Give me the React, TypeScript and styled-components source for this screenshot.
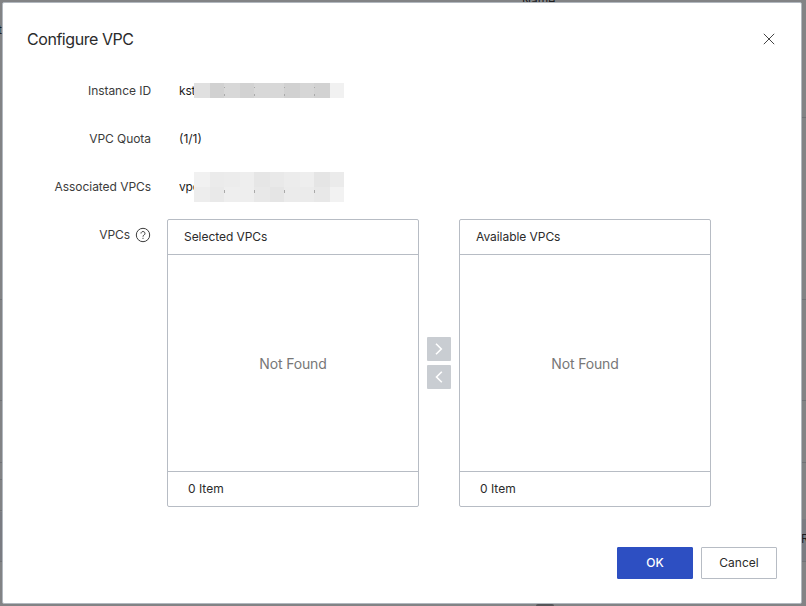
import React from "react";
import styled, { createGlobalStyle } from "styled-components";

const GlobalStyle = createGlobalStyle`
  * { box-sizing: border-box; }
  body {
    margin: 0;
    overflow: hidden;
    font-family: Inter, "Liberation Sans", sans-serif;
    font-size: 12px;
    line-height: 20px;
    color: #2b2b2b;
  }
`;

const Backdrop = styled.div`
  position: relative;
  height: 606px;
  padding: 2px 4px 2px 2px;
  background: #828385;
  overflow: hidden;
`;

const PageLine = styled.div<{ $y: number; $side: "left" | "right" }>`
  position: absolute;
  ${(p) => p.$side}: 0;
  top: ${(p) => p.$y}px;
  width: 4px;
  height: 1px;
  background: #707276;
`;

const PageBand = styled.div<{ $side: "left" | "right"; $y: number; $h: number }>`
  position: absolute;
  ${(p) => p.$side}: 0;
  top: ${(p) => p.$y}px;
  width: 4px;
  height: ${(p) => p.$h}px;
  background: #7a7c82;
`;

const PageText = styled.span<{ $x: number; $y: number }>`
  position: absolute;
  left: ${(p) => p.$x}px;
  top: ${(p) => p.$y}px;
  color: #1c1c1e;
  white-space: nowrap;
`;

const PageSmudge = styled.div`
  position: absolute;
  left: 536px;
  bottom: 0;
  width: 18px;
  height: 2px;
  border-radius: 2px 2px 0 0;
  background: #555558;
`;

const Dialog = styled.section`
  position: relative;
  display: flex;
  flex-direction: column;
  width: 800px;
  height: 602px;
  padding: 24px;
  background: #fff;
  border: 1px solid #b2b8bf;
  border-radius: 2px;
`;

const Header = styled.header`
  display: flex;
  align-items: center;
  justify-content: space-between;
  height: 24px;
`;

const Title = styled.h1`
  margin: 0;
  font-size: 16px;
  line-height: 24px;
  font-weight: 400;
  letter-spacing: -0.45px;
`;

const CloseButton = styled.button`
  display: flex;
  padding: 2px;
  border: 0;
  background: none;
  color: #444;
`;

const Form = styled.div`
  display: flex;
  flex-direction: column;
  gap: 16px;
  margin-top: 24px;
`;

const Field = styled.div`
  display: grid;
  grid-template-columns: 124px 1fr;
  column-gap: 28px;
  min-height: 32px;
  line-height: 32px;
`;

const TransferField = styled(Field)`
  column-gap: 16px;
`;

const Label = styled.div`
  display: flex;
  justify-content: flex-end;
  align-items: center;
  gap: 5px;
  height: 32px;
  color: #3c3c3c;
  letter-spacing: -0.05px;
  white-space: nowrap;
`;

const Value = styled.div`
  display: flex;
  align-items: center;
  height: 32px;
  color: #1c1c1c;
`;

const Prefix = styled.span`
  width: 16px;
  margin-right: -0.6px;
  overflow: hidden;
  letter-spacing: -0.2px;
  white-space: nowrap;
`;

const Mosaic = styled.div<{ $shift: number }>`
  display: grid;
  grid-template-columns: 16px 14px 16px 14px 16px 14px 16px 14px 16px 14px;
  grid-auto-rows: 15px;
  width: 150px;
  margin-top: ${(p) => p.$shift}px;
`;

const Tile = styled.i<{ $shade: string; $seam: boolean; $lower: boolean }>`
  background: ${(p) =>
    p.$seam
      ? `linear-gradient(#aaa, #aaa) 0 ${p.$lower ? 3 : 4}px / 1px 1px no-repeat,
         linear-gradient(#aaa, #aaa) 0 ${p.$lower ? 4 : 11}px / 1px 2px no-repeat,
         ${p.$shade}`
      : p.$shade};
`;

const Transfer = styled.div`
  display: flex;
  align-items: center;
  gap: 8px;
  line-height: 20px;
`;

const Panel = styled.div`
  display: flex;
  flex-direction: column;
  width: 252px;
  height: 288px;
  border: 1px solid #b7bcc4;
  border-radius: 2px;
`;

const PanelHeader = styled.div`
  height: 35px;
  padding: 7px 16px;
  border-bottom: 1px solid #b7bcc4;
  letter-spacing: -0.05px;
`;

const PanelBody = styled.div`
  display: flex;
  flex: 1;
  align-items: center;
  justify-content: center;
  padding-top: 2px;
  font-size: 14px;
  letter-spacing: -0.15px;
  color: #777;
`;

const PanelFooter = styled.div`
  height: 35px;
  padding: 7px 20px;
  border-top: 1px solid #b7bcc4;
`;

const Movers = styled.div`
  display: flex;
  flex-direction: column;
  gap: 4px;
`;

const MoveButton = styled.button`
  display: flex;
  align-items: center;
  justify-content: center;
  width: 24px;
  height: 24px;
  padding: 0;
  border: 0;
  border-radius: 1px;
  background: #c9cdd2;
  color: #fff;
`;

const Footer = styled.footer`
  display: flex;
  justify-content: flex-end;
  gap: 8px;
  margin-top: auto;
`;

const Button = styled.button<{ $primary?: boolean }>`
  width: 76px;
  height: 32px;
  padding: 0;
  border: 1px solid ${(p) => (p.$primary ? "#2d4fc2" : "#b7bcc4")};
  border-radius: 1px;
  background: ${(p) => (p.$primary ? "#2d4fc2" : "#fff")};
  color: ${(p) => (p.$primary ? "#fff" : "#2b2b2b")};
  font: ${(p) => (p.$primary ? 500 : 400)} 12px/20px Inter, "Liberation Sans", sans-serif;
`;

const CloseIcon = () => (
  <svg width="12" height="12" viewBox="0 0 12 12" fill="none" stroke="currentColor">
    <path d="M.8 .8 11.2 11.2M11.2 .8 .8 11.2" />
  </svg>
);

const HelpIcon = () => (
  <svg width="16" height="16" viewBox="0 0 16 16" fill="none" stroke="currentColor">
    <circle cx="8" cy="8" r="6.7" />
    <path d="M6 6.5a2 1.9 0 1 1 3.1 1.5C8.3 8.5 8 8.7 8 9.7M8 10.8v1.1" />
  </svg>
);

const Chevron = ({ left = false }: { left?: boolean }) => (
  <svg width="12" height="12" viewBox="0 0 12 12" fill="none" stroke="currentColor" strokeWidth="1.6">
    <path d={left ? "M8.8 .7 3.5 6 8.8 11.3" : "M3 .7 8.3 6 3 11.3"} />
  </svg>
);

const instanceTiles = ["#e0e0e0 #d1d1d1 #d8d8d8 #d2d2d2 #d8d8d8 #d8d8d8 #d1d1d1 #d6d6d6 #d2d2d2 #f1f1f1"];
const vpcTiles = [
  "#f1f1f1 #ebebeb #ececec #eeeeee #e6e6e6 #e9e9e9 #ececec #eeeeee #e5e5e5 #ebebeb",
  "#ededed #e9e9e9 #eeeeee #eeeeee #e8e8e8 #e5e5e5 #ebebeb #ebebeb #e8e8e8 #f2f2f2",
];

const Redacted = ({ rows, shift = 0 }: { rows: string[]; shift?: number }) => (
  <Mosaic $shift={shift}>
    {rows.flatMap((row, r) =>
      row.split(" ").map((shade, i) => (
        <Tile
          key={`${r}-${i}`}
          $shade={shade}
          $seam={i > 0 && i % 2 === 0 && r === rows.length - 1}
          $lower={r === 1}
        />
      )),
    )}
  </Mosaic>
);

const TransferPanel = ({ title }: { title: string }) => (
  <Panel>
    <PanelHeader>{title}</PanelHeader>
    <PanelBody>Not Found</PanelBody>
    <PanelFooter>0 Item</PanelFooter>
  </Panel>
);

export default function App() {
  return (
    <>
      <GlobalStyle />
      <Backdrop>
        <PageBand $side="left" $y={512} $h={49} />
        <PageBand $side="right" $y={519} $h={42} />
        {[299, 400, 462, 479, 510, 561].map((y) => (
          <PageLine key={y} $y={y} $side="left" />
        ))}
        {[117, 299, 400, 462, 561].map((y) => (
          <PageLine key={y} $y={y} $side="right" />
        ))}
        <PageText $x={522} $y={-9}>Name</PageText>
        <PageText $x={-2} $y={20}>t</PageText>
        <PageText $x={801} $y={529}>R</PageText>
        <PageSmudge />
        <Dialog role="dialog" aria-label="Configure VPC">
          <Header>
            <Title>Configure VPC</Title>
            <CloseButton aria-label="Close">
              <CloseIcon />
            </CloseButton>
          </Header>
          <Form>
            <Field>
              <Label>Instance ID</Label>
              <Value>
                <Prefix>kst</Prefix>
                <Redacted rows={instanceTiles} shift={-1} />
              </Value>
            </Field>
            <Field>
              <Label>VPC Quota</Label>
              <Value>(1/1)</Value>
            </Field>
            <Field>
              <Label>Associated VPCs</Label>
              <Value>
                <Prefix>vpc</Prefix>
                <Redacted rows={vpcTiles} />
              </Value>
            </Field>
            <TransferField>
              <Label>
                VPCs
                <HelpIcon />
              </Label>
              <Transfer>
                <TransferPanel title="Selected VPCs" />
                <Movers>
                  <MoveButton aria-label="Move right">
                    <Chevron />
                  </MoveButton>
                  <MoveButton aria-label="Move left">
                    <Chevron left />
                  </MoveButton>
                </Movers>
                <TransferPanel title="Available VPCs" />
              </Transfer>
            </TransferField>
          </Form>
          <Footer>
            <Button $primary>OK</Button>
            <Button>Cancel</Button>
          </Footer>
        </Dialog>
      </Backdrop>
    </>
  );
}
